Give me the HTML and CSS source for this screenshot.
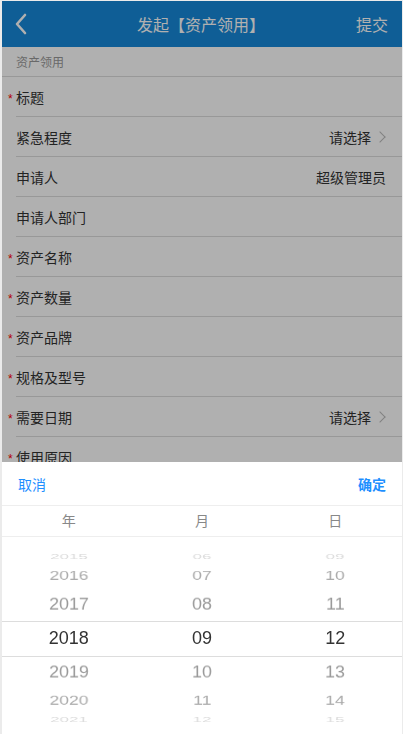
FILE: index.html
```html
<!DOCTYPE html>
<html lang="zh-CN">
<head>
    <meta charset="UTF-8">
    <meta name="viewport" content="width=device-width, initial-scale=1.0">
    <title>发起【资产领用】</title>
    <link rel="stylesheet" href="styles.css">
</head>
<body>
    <div class="app">
        <header class="topbar">
            <a class="back" href="#">
                <svg width="14" height="22" viewBox="0 0 14 22"><polyline points="11,2 3,11 11,20" fill="none" stroke="#fff" stroke-width="2.6" stroke-linecap="round" stroke-linejoin="round"/></svg>
            </a>
            <h1 class="title">发起【资产领用】</h1>
            <a class="submit" href="#">提交</a>
        </header>

        <div class="section-title">资产领用</div>

        <ul class="form-list">
            <li class="row req"><span class="label">标题</span></li>
            <li class="row"><span class="label">紧急程度</span><span class="value select">请选择</span></li>
            <li class="row"><span class="label">申请人</span><span class="value">超级管理员</span></li>
            <li class="row"><span class="label">申请人部门</span></li>
            <li class="row req"><span class="label">资产名称</span></li>
            <li class="row req"><span class="label">资产数量</span></li>
            <li class="row req"><span class="label">资产品牌</span></li>
            <li class="row req"><span class="label">规格及型号</span></li>
            <li class="row req"><span class="label">需要日期</span><span class="value select">请选择</span></li>
            <li class="row req"><span class="label">使用原因</span></li>
        </ul>

        <div class="mask"></div>

        <div class="picker">
            <div class="picker-head">
                <a class="cancel" href="#">取消</a>
                <a class="confirm" href="#">确定</a>
            </div>
            <div class="picker-labels">
                <span>年</span><span>月</span><span>日</span>
            </div>
            <div class="wheels">
                <div class="band"></div>
                <div class="wheel">
                    <span class="item up3">2015</span>
                    <span class="item up2">2016</span>
                    <span class="item up1">2017</span>
                    <span class="item on">2018</span>
                    <span class="item down1">2019</span>
                    <span class="item down2">2020</span>
                    <span class="item down3">2021</span>
                </div>
                <div class="wheel">
                    <span class="item up3">06</span>
                    <span class="item up2">07</span>
                    <span class="item up1">08</span>
                    <span class="item on">09</span>
                    <span class="item down1">10</span>
                    <span class="item down2">11</span>
                    <span class="item down3">12</span>
                </div>
                <div class="wheel">
                    <span class="item up3">09</span>
                    <span class="item up2">10</span>
                    <span class="item up1">11</span>
                    <span class="item on">12</span>
                    <span class="item down1">13</span>
                    <span class="item down2">14</span>
                    <span class="item down3">15</span>
                </div>
            </div>
        </div>
    </div>
</body>
</html>
```

FILE: styles.css
```css
* {
    box-sizing: border-box;
}

html, body {
    margin: 0;
    padding: 0;
}

body {
    background-color: #ebebeb;
    font-family: "Liberation Sans", "Noto Sans CJK SC", sans-serif;
    color: #333;
}

a {
    text-decoration: none;
}

.app {
    position: relative;
    margin: 1px 1px 0 2px;
    height: 733px;
    overflow: hidden;
    background-color: #fff;
}

/* top bar */
.topbar {
    display: flex;
    align-items: center;
    height: 46px;
    padding: 0 14px 0 12px;
    background-color: #1688d9;
    color: #fff;
}

.back {
    display: flex;
    width: 40px;
}

.title {
    flex: 1;
    margin: 0;
    text-align: center;
    font-size: 16px;
    font-weight: normal;
    color: #fff;
}

.submit {
    width: 40px;
    text-align: right;
    font-size: 16px;
    color: #fff;
}

/* form */
.section-title {
    height: 30px;
    line-height: 32px;
    padding-left: 14px;
    font-size: 12px;
    color: #999;
    border-bottom: 1px solid #ddd;
}

.form-list {
    list-style: none;
    margin: 0;
    padding: 0;
}

.row {
    display: flex;
    align-items: center;
    justify-content: space-between;
    height: 40px;
    margin-left: 14px;
    padding-right: 16px;
    border-bottom: 1px solid #ddd;
    font-size: 14px;
}

.req .label::before {
    content: "*";
    display: inline-block;
    width: 8px;
    margin-left: -8px;
    color: #f00;
    font-size: 12px;
}

.value {
    color: #333;
}

.select::after {
    content: "";
    display: inline-block;
    width: 7px;
    height: 7px;
    margin: 0 2px 2px 5px;
    border-top: 1px solid #bbb;
    border-right: 1px solid #bbb;
    transform: rotate(45deg);
}

.mask {
    position: absolute;
    top: 0;
    left: 0;
    right: 0;
    bottom: 0;
    background-color: rgba(0, 0, 0, 0.31);
}

/* date picker */
.picker {
    position: absolute;
    left: 0;
    right: 0;
    bottom: 0;
    height: 272px;
    background-color: #fff;
}

.picker-head {
    display: flex;
    justify-content: space-between;
    align-items: center;
    height: 44px;
    padding: 0 16px;
    border-bottom: 1px solid #eee;
    font-size: 14px;
}

.cancel {
    color: #1e8fff;
}

.confirm {
    color: #1e8fff;
    font-weight: bold;
}

.picker-labels {
    display: grid;
    grid-template-columns: repeat(3, 1fr);
    height: 31px;
    line-height: 30px;
    text-align: center;
    font-size: 14px;
    color: #888;
    border-bottom: 1px solid #eee;
}

.wheels {
    position: relative;
    display: grid;
    grid-template-columns: repeat(3, 1fr);
    height: 202px;
}

.band {
    position: absolute;
    left: 0;
    right: 0;
    top: 84px;
    height: 36px;
    border-top: 1px solid #ddd;
    border-bottom: 1px solid #ddd;
}

.wheel {
    display: grid;
    align-items: center;
    justify-items: center;
    perspective: 800px;
}

.item {
    grid-area: 1 / 1;
    line-height: 35px;
    font-size: 18px;
    color: #999;
}

.item.on {
    color: #333;
}

.up1 { transform: translateZ(-100px) rotateX(20deg) translateZ(100px); }
.up2 { transform: translateZ(-100px) rotateX(40deg) translateZ(100px); color: #aaa; }
.up3 { transform: translateZ(-100px) rotateX(60deg) translateZ(100px); color: #ddd; }
.down1 { transform: translateZ(-100px) rotateX(-20deg) translateZ(100px); }
.down2 { transform: translateZ(-100px) rotateX(-40deg) translateZ(100px); color: #aaa; }
.down3 { transform: translateZ(-100px) rotateX(-60deg) translateZ(100px); color: #ddd; }
```
